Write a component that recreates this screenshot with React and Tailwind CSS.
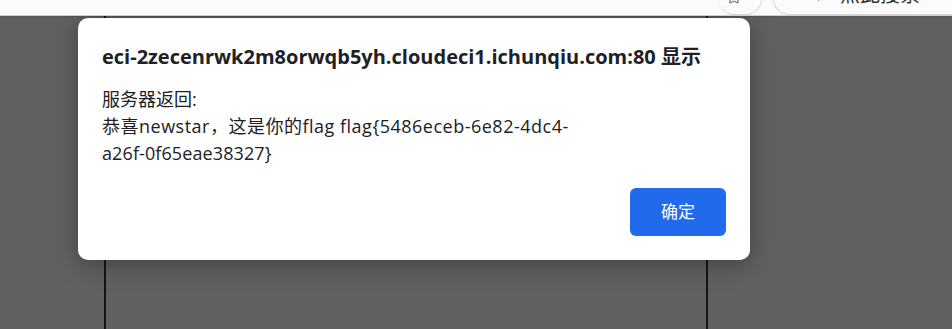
import React from "react";
import { Star, ChevronLeft } from "lucide-react";

const font = { fontFamily: '"Open Sans", "Noto Sans CJK SC", sans-serif' };

function TopBar() {
  return (
    <div className="h-[16px] bg-[#fbfbfb] border-b border-[#cfcfcf] shadow-[0_1px_2px_rgba(0,0,0,0.15)] flex items-end overflow-hidden relative z-10">
      <div className="ml-[718px] w-[44px] h-[16px] rounded-b-[16px] border-b border-r border-[#d8d8d8] flex justify-center items-end overflow-hidden">
        <Star className="w-[16px] h-[16px] mb-[9px] mr-[12px] text-[#555]" strokeWidth={1.5} />
      </div>
      <div className="ml-[11px] flex-1 h-[16px] rounded-bl-[16px] border-b border-l border-[#d8d8d8] flex items-start overflow-hidden text-[#333] text-[20px] leading-none">
        <ChevronLeft className="w-[14px] h-[14px] ml-[36px] -mt-[9px] shrink-0 text-[#444]" strokeWidth={1.5} />
        <span className="ml-[16px] -mt-[14px] whitespace-nowrap">点此搜索</span>
      </div>
    </div>
  );
}

function AlertDialog() {
  return (
    <div className="absolute left-[78px] top-[18px] w-[672px] h-[242px] bg-white rounded-[10px] shadow-[0_4px_24px_rgba(0,0,0,0.35)] px-[24px] pt-[25px] flex flex-col">
      <div className="text-[20px] font-bold text-[#202124] leading-[28px] whitespace-nowrap">
        eci-2zecenrwk2m8orwqb5yh.cloudeci1.ichunqiu.com:80 显示
      </div>
      <div className="mt-[15px] text-[18px] text-[#202124] leading-[27px]">
        服务器返回:
        <br />
        <span className="tracking-[0.5px]">
          恭喜newstar，这是你的flag flag{"{"}5486eceb-6e82-4dc4-
        </span>
        <br />
        <span className="tracking-[0.1px]">a26f-0f65eae38327{"}"}</span>
      </div>
      <div className="flex justify-end mt-[21px]">
        <button className="w-[96px] h-[48px] bg-[#216aeb] text-white text-[17px] rounded-[6px]">
          确定
        </button>
      </div>
    </div>
  );
}

export default function App() {
  return (
    <div className="w-[952px] h-[329px] bg-[#616161] relative overflow-hidden" style={font}>
      <TopBar />
      <div className="flex h-[313px]">
        <div className="ml-[104px] w-[604px] h-full border-l-2 border-r-2 border-[#141414]" />
      </div>
      <AlertDialog />
    </div>
  );
}
